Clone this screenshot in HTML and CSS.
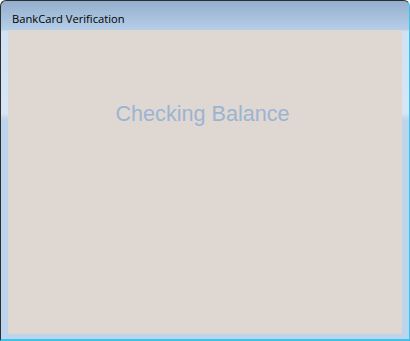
FILE: index.html
```html
<!DOCTYPE html>
<html lang="en">
<head>
  <meta charset="UTF-8" />
  <title>BankCard Verification</title>
  <link rel="stylesheet" href="styles.css">
</head>
<body>
  <div class="window">
    <div class="titlebar">BankCard Verification</div>
    <div class="client">
      <p class="status">Checking Balance</p>
    </div>
  </div>
</body>
</html>
```

FILE: styles.css
```css
body { margin: 0; background: #ffffff; }
.window { width: 410px; height: 341px; box-sizing: border-box; border-top: 1px solid #2e2e2e; border-left: 1px solid #2e2e2e; border-right: 1px solid #38c4ec; border-bottom: 2px solid #38c4ec; border-radius: 6px 6px 0 0; background: linear-gradient(to bottom, #93afcd 0, #b6cfe9 29px, #cfe1f3 30px, #d6e6f5 112px, #bcd4ec 119px, #bcd4ec 100%); display: flex; flex-direction: column; }
.titlebar { height: 29px; padding-left: 11px; box-sizing: border-box; padding-top: 10px; font-family: "Open Sans", "DejaVu Sans", sans-serif; font-size: 11.2px; line-height: 16px; color: #000; }
.client { margin: 0 7px; height: 304px; background: #dfd7d2; }
.status { margin: 71px 0 0; padding-right: 5px; text-align: center; font-family: "Liberation Sans", Arial, sans-serif; font-size: 21.6px; line-height: 26px; color: #9bb4d2; }
```
